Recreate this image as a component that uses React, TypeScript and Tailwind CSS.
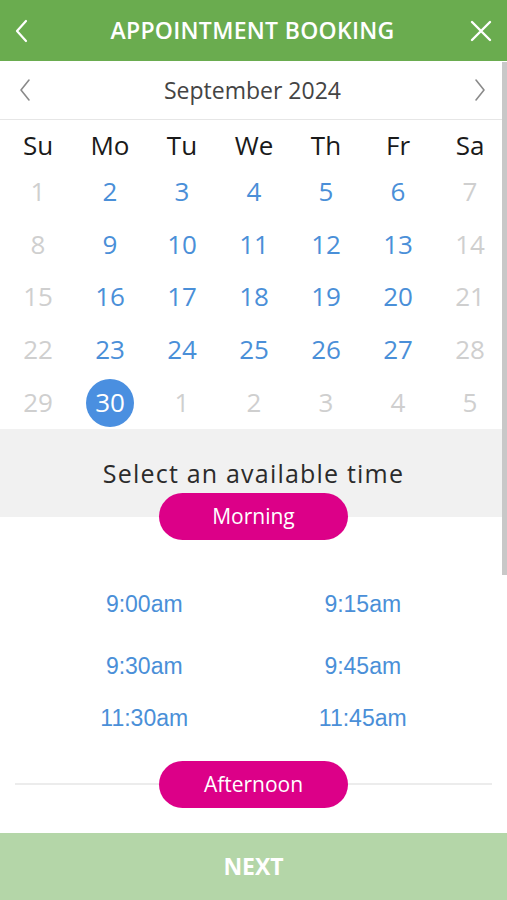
import React, { useState } from 'react';

const weekdays = ['Su', 'Mo', 'Tu', 'We', 'Th', 'Fr', 'Sa'];

// [day, inMonth & available]
const weeks: [number, boolean][][] = [
  [[1, false], [2, true], [3, true], [4, true], [5, true], [6, true], [7, false]],
  [[8, false], [9, true], [10, true], [11, true], [12, true], [13, true], [14, false]],
  [[15, false], [16, true], [17, true], [18, true], [19, true], [20, true], [21, false]],
  [[22, false], [23, true], [24, true], [25, true], [26, true], [27, true], [28, false]],
  [[29, false], [30, true], [1, false], [2, false], [3, false], [4, false], [5, false]],
];

const morning = [
  ['9:00am', '9:15am'],
  ['9:30am', '9:45am'],
  ['11:30am', '11:45am'],
];

const Pill = ({ label }: { label: string }) => (
  <div className="w-[189px] h-[47px] rounded-full bg-[#dc0088] flex items-center justify-center text-white text-[21px]">
    {label}
  </div>
);

export default function App() {
  const [selected, setSelected] = useState(30);

  return (
    <div className="relative w-[507px] h-[900px] overflow-hidden bg-white flex flex-col font-['Open_Sans',sans-serif]">
      {/* Header */}
      <div className="h-[61px] bg-[#6aac4f] flex items-center justify-between px-[14px] shrink-0">
        <svg width="16" height="24" viewBox="0 0 16 24" fill="none" stroke="white" strokeWidth="2.2" strokeLinecap="round" strokeLinejoin="round">
          <path d="M12 2 L3 12 L12 22" />
        </svg>
        <div className="text-white text-[23px] font-semibold tracking-[0.3px] pl-[6px]">APPOINTMENT BOOKING</div>
        <svg width="24" height="24" viewBox="0 0 24 24" fill="none" stroke="white" strokeWidth="2.4" strokeLinecap="round">
          <path d="M3 3 L21 21 M21 3 L3 21" />
        </svg>
      </div>

      {/* Month switcher */}
      <div className="h-[59px] border-b border-[#e6e6e6] flex items-center justify-between pl-[18px] pr-[20px] shrink-0">
        <svg width="14" height="24" viewBox="0 0 14 24" fill="none" stroke="#8a8a8a" strokeWidth="1.6" strokeLinecap="round" strokeLinejoin="round">
          <path d="M11 2 L3 12 L11 22" />
        </svg>
        <div className="text-[#444] text-[23px]">September 2024</div>
        <svg width="14" height="24" viewBox="0 0 14 24" fill="none" stroke="#8a8a8a" strokeWidth="1.6" strokeLinecap="round" strokeLinejoin="round">
          <path d="M3 2 L11 12 L3 22" />
        </svg>
      </div>

      {/* Calendar */}
      <div className="pl-[2px] pr-[1px] shrink-0">
        <div className="grid grid-cols-7 h-[45px] pt-[6px] items-center">
          {weekdays.map((d) => (
            <div key={d} className="text-center text-[#1a1a1a] text-[26px]">{d}</div>
          ))}
        </div>
        {weeks.map((week, i) => (
          <div key={i} className="grid grid-cols-7 h-[52.8px] items-center">
            {week.map(([day, active], j) => {
              const isSel = active && day === selected;
              return (
                <div key={j} className="flex justify-center">
                  <button
                    onClick={() => active && setSelected(day)}
                    className={
                      isSel
                        ? 'w-[48px] h-[48px] rounded-full bg-[#4a8fe0] text-white text-[26px] flex items-center justify-center'
                        : active
                        ? 'text-[#4a8fd8] text-[26px]'
                        : 'text-[#cfcfcf] text-[26px]'
                    }
                  >
                    {day}
                  </button>
                </div>
              );
            })}
          </div>
        ))}
      </div>

      {/* Time picker */}
      <div className="bg-[#f1f1f1] flex flex-col items-center pt-[28px] shrink-0">
        <div className="text-[#2b2b2b] text-[25px] tracking-[1.2px] leading-[32px]">Select an available time</div>
        <div className="relative z-10 mt-[4px] mb-[-23px]">
          <Pill label="Morning" />
        </div>
      </div>

      <div className="flex flex-col pt-[75px] font-['Liberation_Sans',Arial,sans-serif]">
        {morning.map((row, i) => (
          <div key={i} className={`grid grid-cols-2 ${i === 0 ? 'mb-[38px]' : 'mb-[28px]'}`}>
            {row.map((t, j) => (
              <button
                key={t}
                className={`text-[#4a8fd8] text-[23px] leading-[24px] ${j === 0 ? 'pl-[35px]' : 'pr-[35px]'} text-center`}
              >
                {t}
              </button>
            ))}
          </div>
        ))}
      </div>

      <div className="flex items-center px-[15px] mt-[3px]">
        <div className="flex-1 h-[2px] bg-[#ececec]" />
        <Pill label="Afternoon" />
        <div className="flex-1 h-[2px] bg-[#ececec]" />
      </div>

      <div className="flex-1" />

      {/* Footer */}
      <button className="h-[67px] bg-[#b4d6a8] text-white text-[23px] font-bold shrink-0 font-['Open_Sans',sans-serif]">
        NEXT
      </button>

      {/* Scrollbar */}
      <div className="absolute right-0 top-[62px] w-[5px] h-[513px] bg-[#c8c8c8]" />
    </div>
  );
}
